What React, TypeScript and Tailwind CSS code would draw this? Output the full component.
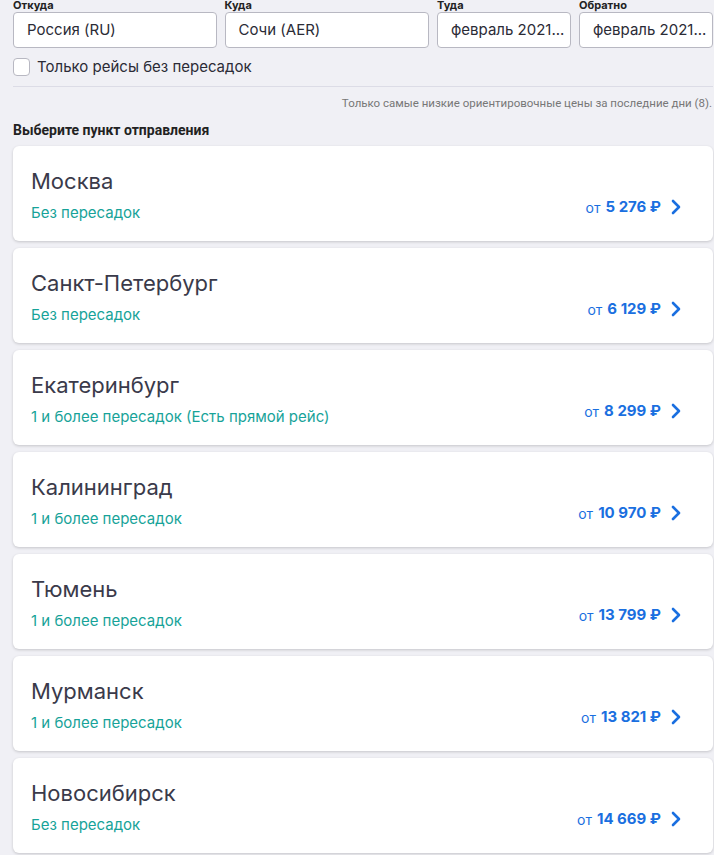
import React from 'react';

interface Destination {
    city: string;
    stops: string;
    price: string;
}

const destinations: Destination[] = [
    { city: 'Москва', stops: 'Без пересадок', price: '5 276 ₽' },
    { city: 'Санкт-Петербург', stops: 'Без пересадок', price: '6 129 ₽' },
    { city: 'Екатеринбург', stops: '1 и более пересадок (Есть прямой рейс)', price: '8 299 ₽' },
    { city: 'Калининград', stops: '1 и более пересадок', price: '10 970 ₽' },
    { city: 'Тюмень', stops: '1 и более пересадок', price: '13 799 ₽' },
    { city: 'Мурманск', stops: '1 и более пересадок', price: '13 821 ₽' },
    { city: 'Новосибирск', stops: 'Без пересадок', price: '14 669 ₽' },
];

const Field: React.FC<{ label: string; value: string; className: string }> = ({ label, value, className }) => (
    <div className={`flex flex-col ${className}`}>
        <span className="text-[11px] leading-[12px] font-bold text-[#222] -mt-[1px]">{label}</span>
        <div className="mt-[1px] h-[36px] bg-white border border-[#b8b8c2] rounded-[4px] flex items-center px-[13px] text-[15px] text-[#2b2b36] whitespace-nowrap overflow-hidden">
            {value}
        </div>
    </div>
);

const App: React.FC = () => {
    return (
        <div className="min-h-screen bg-[#f0f0f5] pl-[13px] pr-[1px] pb-4" style={{ fontFamily: 'Inter, "Noto Sans", sans-serif' }}>
            {/* Search form */}
            <div className="flex gap-[8px]">
                <Field label="Откуда" value="Россия (RU)" className="w-[204px]" />
                <Field label="Куда" value="Сочи (AER)" className="w-[205px]" />
                <Field label="Туда" value="февраль 2021..." className="w-[134px]" />
                <Field label="Обратно" value="февраль 2021..." className="w-[134px]" />
            </div>

            <label className="flex items-center mt-[9px] h-[20px]">
                <span className="w-[17px] h-[18px] bg-white border border-[#b8b8c2] rounded-[4px]" />
                <span className="ml-[7px] text-[15px] text-[#2b2b36]">Только рейсы без пересадок</span>
            </label>

            <div className="mt-[9px] h-px bg-[#dcdce6]" />

            <p className="mt-[8px] text-right text-[11.5px] text-[#777] pr-[1px]" style={{ fontFamily: 'Roboto, sans-serif' }}>
                Только самые низкие ориентировочные цены за последние дни (8).
            </p>

            <h2 className="mt-[8px] text-[14px] font-bold text-[#222]" style={{ fontFamily: 'Roboto, sans-serif' }}>
                Выберите пункт отправления
            </h2>

            {/* Destinations */}
            <div className="mt-[5px] flex flex-col gap-[7px]">
                {destinations.map((d) => (
                    <div key={d.city} className="bg-white rounded-[6px] shadow-[0_1px_3px_rgba(0,0,0,0.18)] h-[95px] pl-[18px] pr-[31px] pt-[20px]">
                        <div className="text-[22px] leading-[30px] text-[#3a3a4a]">{d.city}</div>
                        <div className="mt-[7px] h-[20px] flex items-end justify-between">
                            <span className="text-[15px] leading-[20px] text-[#17a399]">{d.stops}</span>
                            <div className="flex items-center mb-[5px] text-[#1a6fe0]">
                                <span className="text-[14px]">от</span>
                                <span className="ml-[5px] text-[15px] font-bold">{d.price}</span>
                                <svg className="ml-[9px] w-[12px] h-[16px]" viewBox="0 0 12 16" fill="none" stroke="currentColor" strokeWidth={2.6} strokeLinecap="round" strokeLinejoin="round">
                                    <path d="M3 2 L9 8 L3 14" />
                                </svg>
                            </div>
                        </div>
                    </div>
                ))}
            </div>
        </div>
    );
};

export default App;
